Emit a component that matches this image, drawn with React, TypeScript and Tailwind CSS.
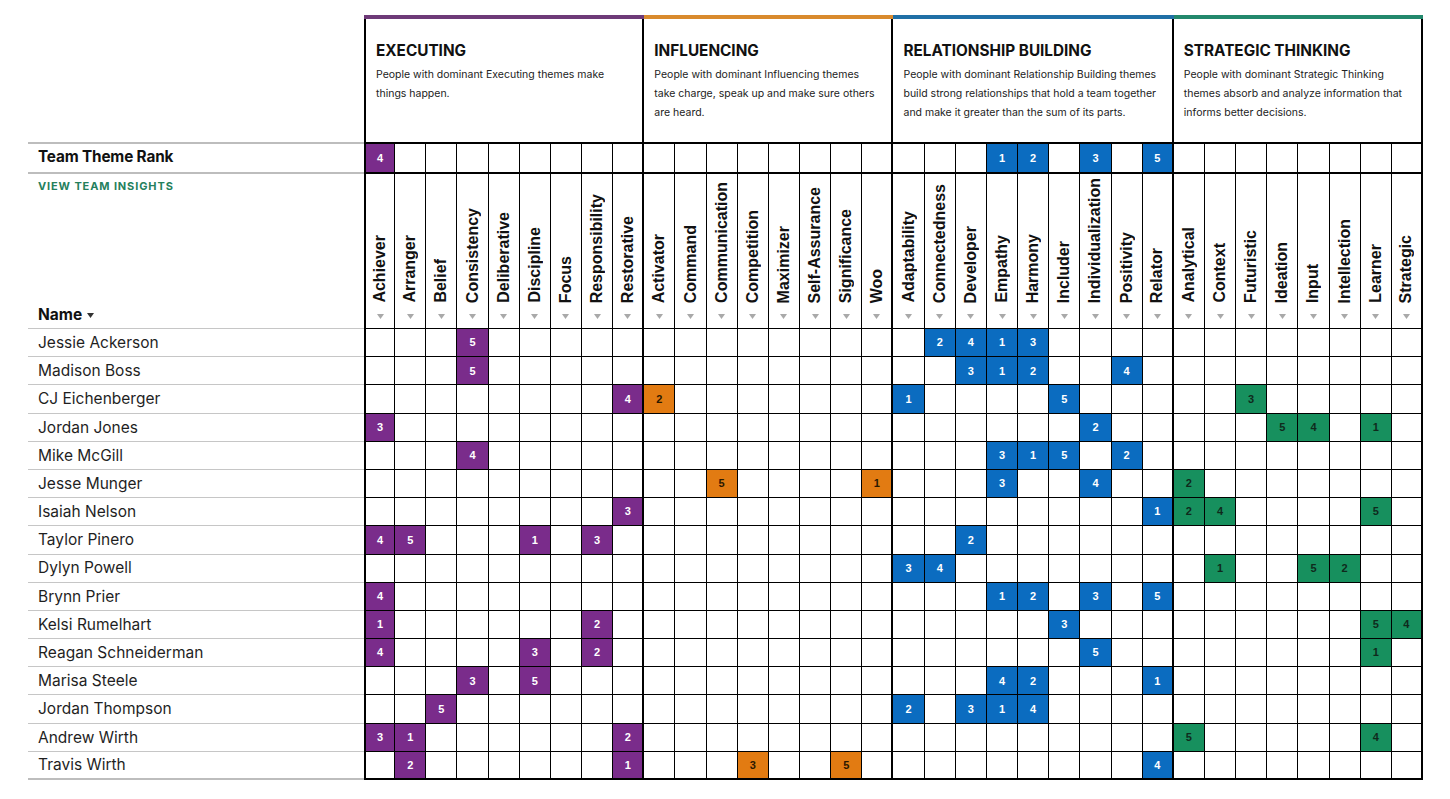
import React from "react";

type Section = {
  title: string;
  desc: string;
  bar: string;
  fill: string;
  span: string;
  cols: string[];
};

const SECTIONS: Section[] = [
  {
    title: "EXECUTING",
    desc: "People with dominant Executing themes make things happen.",
    bar: "bg-[#6e3a78]",
    fill: "bg-[#7a2c8b] text-white",
    span: "col-span-9",
    cols: ["Achiever", "Arranger", "Belief", "Consistency", "Deliberative", "Discipline", "Focus", "Responsibility", "Restorative"],
  },
  {
    title: "INFLUENCING",
    desc: "People with dominant Influencing themes take charge, speak up and make sure others are heard.",
    bar: "bg-[#d98a2d]",
    fill: "bg-[#e27b12] text-[#2b1800]",
    span: "col-span-8",
    cols: ["Activator", "Command", "Communication", "Competition", "Maximizer", "Self-Assurance", "Significance", "Woo"],
  },
  {
    title: "RELATIONSHIP BUILDING",
    desc: "People with dominant Relationship Building themes build strong relationships that hold a team together and make it greater than the sum of its parts.",
    bar: "bg-[#1f6fa6]",
    fill: "bg-[#0b6cc0] text-white",
    span: "col-span-9",
    cols: ["Adaptability", "Connectedness", "Developer", "Empathy", "Harmony", "Includer", "Individualization", "Positivity", "Relator"],
  },
  {
    title: "STRATEGIC THINKING",
    desc: "People with dominant Strategic Thinking themes absorb and analyze information that informs better decisions.",
    bar: "bg-[#22886c]",
    fill: "bg-[#17905e] text-[#0f2a1c]",
    span: "col-span-8",
    cols: ["Analytical", "Context", "Futuristic", "Ideation", "Input", "Intellection", "Learner", "Strategic"],
  },
];

// flat list of columns with their section
const COLUMNS = SECTIONS.flatMap((s, si) =>
  s.cols.map((name, ci) => ({ name, section: si, last: ci === s.cols.length - 1 }))
);

const TEAM: Record<number, number> = { 0: 4, 20: 1, 21: 2, 23: 3, 25: 5 };

const PEOPLE: [string, Record<number, number>][] = [
  ["Jessie Ackerson", { 3: 5, 18: 2, 19: 4, 20: 1, 21: 3 }],
  ["Madison Boss", { 3: 5, 19: 3, 20: 1, 21: 2, 24: 4 }],
  ["CJ Eichenberger", { 8: 4, 9: 2, 17: 1, 22: 5, 28: 3 }],
  ["Jordan Jones", { 0: 3, 23: 2, 29: 5, 30: 4, 32: 1 }],
  ["Mike McGill", { 3: 4, 20: 3, 21: 1, 22: 5, 24: 2 }],
  ["Jesse Munger", { 11: 5, 16: 1, 20: 3, 23: 4, 26: 2 }],
  ["Isaiah Nelson", { 8: 3, 25: 1, 26: 2, 27: 4, 32: 5 }],
  ["Taylor Pinero", { 0: 4, 1: 5, 5: 1, 7: 3, 19: 2 }],
  ["Dylyn Powell", { 17: 3, 18: 4, 27: 1, 30: 5, 31: 2 }],
  ["Brynn Prier", { 0: 4, 20: 1, 21: 2, 23: 3, 25: 5 }],
  ["Kelsi Rumelhart", { 0: 1, 7: 2, 22: 3, 32: 5, 33: 4 }],
  ["Reagan Schneiderman", { 0: 4, 5: 3, 7: 2, 23: 5, 32: 1 }],
  ["Marisa Steele", { 3: 3, 5: 5, 20: 4, 21: 2, 25: 1 }],
  ["Jordan Thompson", { 2: 5, 17: 2, 19: 3, 20: 1, 21: 4 }],
  ["Andrew Wirth", { 0: 3, 1: 1, 8: 2, 26: 5, 32: 4 }],
  ["Travis Wirth", { 1: 2, 8: 1, 12: 3, 15: 5, 25: 4 }],
];

const sans = "font-['Inter','Noto_Sans',sans-serif]";
const arial = "font-['Liberation_Sans',Arial,sans-serif]";

function colBorder(i: number) {
  const c = COLUMNS[i];
  return `${i === 0 ? "border-l-2 " : ""}${c.last ? "border-r-2" : "border-r"} border-black`;
}

function ValueCell({ i, value, bottom }: { i: number; value?: number; bottom: string }) {
  const fill = value ? SECTIONS[COLUMNS[i].section].fill : "bg-white";
  return (
    <div className={`${colBorder(i)} ${bottom} ${fill} flex items-center justify-center ${arial} text-[11px] font-bold`}>
      {value ?? ""}
    </div>
  );
}

function Caret() {
  return (
    <svg width="7" height="5" viewBox="0 0 7 5" className="shrink-0">
      <path d="M0 0h7L3.5 5z" fill="#a9a9a9" />
    </svg>
  );
}

export default function App() {
  return (
    <div className={`min-h-screen bg-white pt-[15px] pl-[28px] ${sans} text-[#1a1a1a]`}>
      <div className="grid w-[1395px] grid-cols-[336px_repeat(34,minmax(0,1fr))] grid-rows-[4px_125px_30px_155px_repeat(16,28.2px)]">
        {/* color bars */}
        <div />
        {SECTIONS.map((s) => (
          <div key={s.title + "bar"} className={`${s.span} ${s.bar}`} />
        ))}

        {/* section descriptions */}
        <div className="border-b-2 border-[#bdbdbd]" />
        {SECTIONS.map((s, si) => (
          <div
            key={s.title}
            className={`${s.span} ${si === 0 ? "border-l-2 " : ""}border-r-2 border-b-2 border-black px-[10px] pt-[22px]`}
          >
            <div className="text-[15.3px] font-bold leading-[20px] text-[#111]">{s.title}</div>
            <p className="mt-[4px] text-[10.5px] leading-[19px] text-[#222]">{s.desc}</p>
          </div>
        ))}

        {/* team theme rank */}
        <div className="flex items-center border-b-2 border-[#bdbdbd] px-[10px] pb-[2px] text-[15.3px] font-bold tracking-[-0.01em] text-[#111]">
          Team Theme Rank
        </div>
        {COLUMNS.map((c, i) => (
          <ValueCell key={"t" + c.name} i={i} value={TEAM[i]} bottom="border-b-2" />
        ))}

        {/* column headers */}
        <div className="flex flex-col justify-between border-b border-[#c6c6c6] px-[10px] pt-[6px] pb-[3px]">
          <div className="text-[11px] font-bold leading-[13px] tracking-[0.08em] text-[#25805c]">VIEW TEAM INSIGHTS</div>
          <div className="flex items-center gap-[5px] text-[15.5px] font-bold leading-[20px] text-[#111]">
            Name
            <svg width="7" height="5" viewBox="0 0 7 5">
              <path d="M0 0h7L3.5 5z" fill="#333" />
            </svg>
          </div>
        </div>
        {COLUMNS.map((c, i) => (
          <div key={"h" + c.name} className={`${colBorder(i)} border-b flex flex-col items-center justify-end pb-[9px]`}>
            <span className={`${arial} rotate-180 text-[16px] font-bold leading-none text-[#111] [writing-mode:vertical-rl]`}>
              {c.name}
            </span>
            <div className="mt-[11px]">
              <Caret />
            </div>
          </div>
        ))}

        {/* people */}
        {PEOPLE.map(([name, vals], r) => {
          const lastRow = r === PEOPLE.length - 1;
          return (
            <React.Fragment key={name}>
              <div
                className={`flex items-center ${lastRow ? "border-b-2 border-[#bdbdbd]" : "border-b border-[#c6c6c6]"} px-[10px] text-[15.5px] text-[#1f1f1f]`}
              >
                {name}
              </div>
              {COLUMNS.map((c, i) => (
                <ValueCell key={name + c.name} i={i} value={vals[i]} bottom={lastRow ? "border-b-2" : "border-b"} />
              ))}
            </React.Fragment>
          );
        })}
      </div>
    </div>
  );
}
